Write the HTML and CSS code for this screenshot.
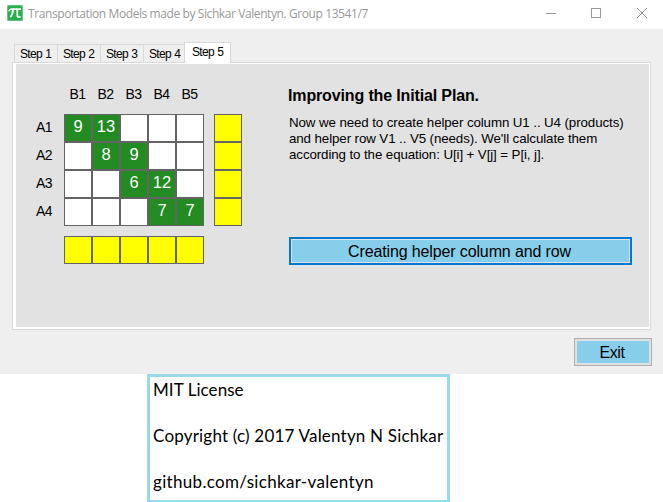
FILE: index.html
```html
<!DOCTYPE html>
<html lang="en">
<head>
<meta charset="utf-8">
<title>Transportation Models</title>
<link rel="stylesheet" href="styles.css">
</head>
<body>
<div class="window">
  <header class="titlebar">
    <svg class="logo" width="16" height="16" viewBox="0 0 16 16"><rect width="16" height="16" fill="#a5cdb0"/><rect x=".6" y=".6" width="14.8" height="14.8" rx="1.5" fill="#22b14c"/><path d="M2 6.2C2.5 4.5 3.2 4.2 4.5 4.2H14M6 4.5C6 8 5.5 10 3.3 12.2M10.3 4.5V10C10.3 12.5 12 12.8 13.6 11.5" fill="none" stroke="#fff" stroke-width="1.8"/></svg>
    <span class="caption">Transportation Models made by Sichkar Valentyn. Group 13541/7</span>
    <svg class="controls" width="104" height="12" viewBox="0 0 104 12" fill="none" stroke="#999"><path d="M0 5.5H10"/><rect x="45.5" y=".5" width="9" height="9"/><path d="M91 0L101 10M101 0L91 10"/></svg>
  </header>
  <main class="client">
    <nav class="tabs">
      <span class="tab">Step 1</span><span class="tab">Step 2</span><span class="tab">Step 3</span><span class="tab">Step 4</span><span class="tab active">Step 5</span>
    </nav>
    <section class="frame">
      <div class="page">
        <div class="plan">
          <div class="heads"><span>B1</span><span>B2</span><span>B3</span><span>B4</span><span>B5</span></div>
          <div class="middle">
            <div class="sides"><span>A1</span><span>A2</span><span>A3</span><span>A4</span></div>
            <div class="grid">
              <i class="on">9</i><i class="on">13</i><i></i><i></i><i></i>
              <i></i><i class="on">8</i><i class="on">9</i><i></i><i></i>
              <i></i><i></i><i class="on">6</i><i class="on">12</i><i></i>
              <i></i><i></i><i></i><i class="on">7</i><i class="on">7</i>
            </div>
            <div class="grid column"><i></i><i></i><i></i><i></i></div>
          </div>
          <div class="grid row"><i></i><i></i><i></i><i></i><i></i></div>
        </div>
        <div class="info">
          <h1>Improving the Initial Plan.</h1>
          <p>Now we need to create helper column U1 .. U4 (products)<br>and helper row V1 .. V5 (needs). We'll calculate them<br>according to the equation: U[i] + V[j] = P[i, j].</p>
          <button class="create">Creating helper column and row</button>
        </div>
      </div>
    </section>
    <button class="exit">Exit</button>
  </main>
</div>
<footer class="license">
  <p class="mit">MIT License</p>
  <p class="copy">Copyright (c) 2017 Valentyn N Sichkar</p>
  <p class="link">github.com/sichkar-valentyn</p>
</footer>
</body>
</html>
```
FILE: styles.css
```css
* { box-sizing: border-box; }
body { margin: 0; width: 663px; height: 502px; overflow: hidden; background: #fff; color: #000; font-family: "Liberation Sans", sans-serif; }
.titlebar { height: 29px; display: flex; align-items: flex-start; padding-left: 7px; }
.logo { margin-top: 5px; }
.caption { margin-left: 5px; font: 12px/28px "Open Sans", sans-serif; letter-spacing: -.41px; color: #999; white-space: nowrap; }
.controls { margin: 8px 13px 0 auto; }
.client { height: 345px; background: #efefef; padding: 13px 11px 0 12px; }
.tabs { height: 20px; display: flex; align-items: flex-end; padding-left: 2px; }
.tab { width: 43px; height: 18px; border: 1px solid #d9d9d9; border-width: 1px 0 0 1px; font-size: 12px; letter-spacing: -.65px; word-spacing: .5px; line-height: 18px; padding-left: 5px; white-space: nowrap; }
.tab:nth-child(4) { width: 41px; }
.tab.active { position: relative; z-index: 1; width: 47px; height: 21px; margin-bottom: -1px; background: #fff; border-right-width: 1px; padding-left: 7px; }
.frame { width: 639px; height: 268px; background: #fff; border: 1px solid #d9d9d9; padding: 1px 1px 2px 3px; }
.page { height: 263px; background: #e2e2e2; display: flex; }
.plan { width: 273px; padding-left: 48px; }
.heads { height: 50px; display: flex; padding-top: 22px; font-size: 14px; letter-spacing: -.6px; line-height: 16px; }
.heads span { width: 28px; padding-right: 1px; text-align: center; }
.middle { display: flex; margin-left: -28px; }
.sides { width: 28px; font-size: 14px; letter-spacing: -.7px; line-height: 27px; display: grid; grid-auto-rows: 28px; }
.grid { display: grid; grid-template-columns: repeat(5, 28px); grid-auto-rows: 28px; }
.grid i { border: 1px solid #646464; background: #fff; font-style: normal; font-size: 16.5px; line-height: 22px; text-align: center; }
.grid .on { background: #228b22; color: #fff; }
.column { grid-template-columns: 28px; margin-left: 10px; }
.row { margin-top: 10px; }
.column i, .row i { background: #ff0; }
.info { width: 343px; }
h1 { margin: 22px 0 0 -1px; font-size: 16px; letter-spacing: -.14px; line-height: 20px; }
p { margin: 0; }
.info p { height: 122px; margin-top: 9px; font-size: 13.33px; letter-spacing: -.1px; line-height: 16px; white-space: nowrap; }
button { display: block; padding: 2px 0 0; color: #000; background: #87ceeb; border-radius: 0; font: 16px/22px "Liberation Sans", sans-serif; letter-spacing: -.13px; }
.create { width: 343px; height: 28px; padding-right: 2px; border: 2px solid #0078d7; box-shadow: inset 0 0 0 1px #e1e1e1; }
.exit { width: 78px; height: 28px; margin: 8px 0 0 562px; padding-right: 2px; letter-spacing: -.4px; border: 1px solid #adadad; box-shadow: inset 0 0 0 2px #e1e1e1; }
.license { width: 303px; height: 128px; margin-left: 147px; border: 3px solid #99d9ea; border-bottom-width: 2px; padding: 1px 0 0 3px; font: 17px/23px Lato, sans-serif; white-space: nowrap; }
.license p { margin-bottom: 23px; }
.mit { letter-spacing: .06px; }
.copy { letter-spacing: .2px; }
.link { letter-spacing: .32px; }
```
